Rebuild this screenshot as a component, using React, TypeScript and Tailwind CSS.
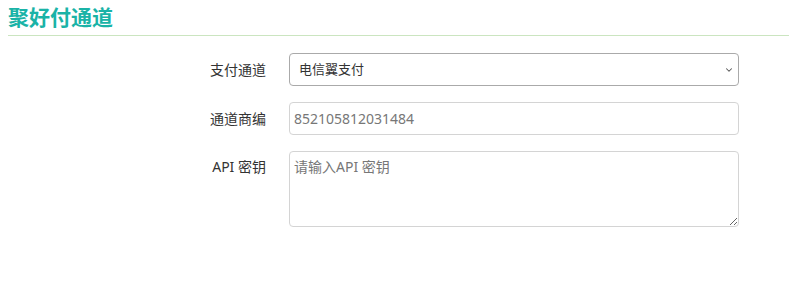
import { ChevronDown } from "lucide-react";

const font = {
  fontFamily: '"Noto Sans", "Noto Sans CJK SC", sans-serif',
};

export default function App() {
  return (
    <div className="h-[284px] w-[789px] bg-white" style={font}>
      <div className="pl-2">
        <h2 className="border-b border-[#cbe5c0] pt-[5px] pb-[5px] text-[21px] font-bold leading-[25px] text-[#1ab3a7]">
          聚好付通道
        </h2>
      </div>

      <form className="mt-[17px] flex flex-col gap-4">
        <div className="flex items-center">
          <label className="w-[266px] text-right text-sm text-[#333]">支付通道</label>
          <div className="relative ml-[23px] w-[450px]">
            <select
              defaultValue="tianyi"
              className="h-[33px] w-full appearance-none rounded-[4px] border border-[#aaa] bg-white pl-[9px] text-[13px] text-[#333] outline-none"
              style={font}
            >
              <option value="tianyi">电信翼支付</option>
            </select>
            <ChevronDown
              className="pointer-events-none absolute right-[5px] top-[12px] h-[10px] w-[10px] text-[#555]"
              strokeWidth={2.5}
            />
          </div>
        </div>

        <div className="flex items-center">
          <label className="w-[266px] text-right text-sm text-[#333]">通道商编</label>
          <input
            defaultValue="852105812031484"
            className="ml-[23px] h-[33px] w-[450px] rounded-[4px] border border-[#d4d4d4] px-[4px] text-sm text-[#777] outline-none"
            style={font}
          />
        </div>

        <div className="flex items-start">
          <label className="w-[266px] pt-[6px] text-right text-sm text-[#333]">API 密钥</label>
          <textarea
            placeholder="请输入API 密钥"
            className="ml-[23px] h-[76px] w-[450px] rounded-[4px] border border-[#d4d4d4] px-[4px] pt-[5px] text-sm text-[#333] outline-none placeholder:text-[#777]"
            style={font}
          />
        </div>
      </form>
    </div>
  );
}
